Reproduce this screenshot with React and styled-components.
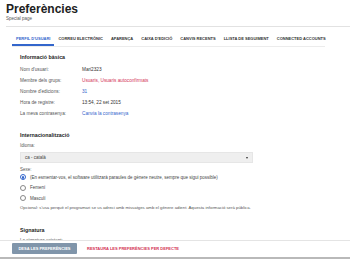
import React from "react";
import styled, { createGlobalStyle } from "styled-components";

const Global = createGlobalStyle`
  html, body { margin: 0; padding: 0; background: #fff; }
  body { font-family: "Liberation Sans", Arial, sans-serif; color: #222; }
  * { box-sizing: border-box; }
`;

const Page = styled.div`
  width: 350px;
  min-height: 259px;
  padding-top: 2px;
`;

const Header = styled.header`
  margin-left: 6px;
  border-bottom: 1px solid #e2e2e2;
  padding-bottom: 4px;
`;

const Title = styled.h1`
  margin: 0;
  font-size: 12px;
  line-height: 14px;
  font-weight: 700;
  color: #202122;
`;

const Subtitle = styled.div`
  font-size: 4.5px;
  line-height: 6px;
  color: #555;
`;

const TabBar = styled.nav`
  display: flex;
  margin-left: 12px;
  width: 313px;
  border-bottom: 1px solid #ececec;
`;

const Tab = styled.div`
  padding: 9px 4px 3px;
  font-size: 4px;
  line-height: 5px;
  font-weight: 700;
  white-space: nowrap;
  text-transform: uppercase;
  color: ${(p) => (p.$active ? "#3366cc" : "#333")};
  border-bottom: 2px solid ${(p) => (p.$active ? "#3366cc" : "transparent")};
`;

const Content = styled.main`
  padding-left: 20px;
`;

const SectionTitle = styled.h2`
  margin: ${(p) => p.$top}px 0 0;
  font-size: 5.3px;
  line-height: 8px;
  font-weight: 700;
  color: #222;
`;

const Rows = styled.div`
  margin-top: 3px;
`;

const Row = styled.div`
  display: grid;
  grid-template-columns: 62px 1fr;
  height: 11px;
  align-items: center;
  font-size: 4.7px;
`;

const Label = styled.span`
  color: #555;
`;

const Value = styled.span`
  color: ${(p) => (p.$tone === "red" ? "#d33355" : p.$tone === "blue" ? "#3366cc" : "#333")};
`;

const FieldLabel = styled.div`
  margin-top: ${(p) => p.$top}px;
  font-size: 4.5px;
  line-height: ${(p) => p.$lh || 6}px;
  color: #555;
`;

const Select = styled.div`
  margin-top: 3px;
  width: 233px;
  height: 11px;
  background: #efefef;
  border: 1px solid #e6e6e6;
  display: flex;
  align-items: center;
  justify-content: space-between;
  padding: 0 4px 0 4px;
  font-size: 4.5px;
  color: #444;
`;

const Caret = styled.span`
  width: 0;
  height: 0;
  border-left: 1.5px solid transparent;
  border-right: 1.5px solid transparent;
  border-top: 2px solid #333;
`;

const RadioRow = styled.div`
  display: flex;
  align-items: center;
  height: 10.5px;
  font-size: 4.5px;
  color: #444;
  gap: 4px;
`;

const Radio = styled.span`
  width: 6px;
  height: 6px;
  border-radius: 50%;
  border: ${(p) => (p.$on ? "1px solid #3366cc" : "0.7px solid #888")};
  display: flex;
  align-items: center;
  justify-content: center;
  flex: none;
  &::after {
    content: "";
    width: 2.6px;
    height: 2.6px;
    border-radius: 50%;
    background: ${(p) => (p.$on ? "#3366cc" : "transparent")};
  }
`;

const Help = styled.div`
  margin-top: 1px;
  font-size: 4.3px;
  line-height: 6px;
  color: #555;
`;

const Footer = styled.footer`
  position: fixed;
  left: 0;
  right: 0;
  bottom: 0;
  background: #fff;
  border-top: 1px solid #e4e4e4;
  border-bottom: 2px solid #b9b9b9;
  padding: 2px 12px 3px;
  display: flex;
  align-items: center;
  gap: 10px;
`;

const Button = styled.button`
  height: 11px;
  border: none;
  border-radius: 1px;
  padding: 0;
  font-family: inherit;
  font-size: 4px;
  font-weight: 700;
  white-space: nowrap;
  text-transform: uppercase;
  background: ${(p) => (p.$primary ? "#8095aa" : "transparent")};
  color: ${(p) => (p.$primary ? "#fff" : "#d33355")};
  width: ${(p) => (p.$primary ? "65px" : "auto")};
`;

const tabs = [
  "Perfil d'usuari",
  "Correu electrònic",
  "Aparença",
  "Caixa d'edició",
  "Canvis recents",
  "Llista de seguiment",
  "Connected accounts",
];

export default function App() {
  return (
    <Page>
      <Global />
      <Header>
        <Title>Preferències</Title>
        <Subtitle>Special page</Subtitle>
      </Header>
      <TabBar>
        {tabs.map((t, i) => (
          <Tab key={t} $active={i === 0}>
            {t}
          </Tab>
        ))}
      </TabBar>
      <Content>
        <SectionTitle $top={6}>Informació bàsica</SectionTitle>
        <Rows>
          <Row>
            <Label>Nom d'usuari:</Label>
            <Value>Mari2323</Value>
          </Row>
          <Row>
            <Label>Membre dels grups:</Label>
            <Value $tone="red">Usuaris, Usuaris autoconfirmats</Value>
          </Row>
          <Row>
            <Label>Nombre d'edicions:</Label>
            <Value $tone="blue">31</Value>
          </Row>
          <Row>
            <Label>Hora de registre:</Label>
            <Value>13:54, 22 set 2015</Value>
          </Row>
          <Row>
            <Label>La meva contrasenya:</Label>
            <Value $tone="blue">Canvia la contrasenya</Value>
          </Row>
        </Rows>
        <SectionTitle $top={12}>Internacionalització</SectionTitle>
        <FieldLabel $top={4}>Idioma:</FieldLabel>
        <Select>
          <span>ca - català</span>
          <Caret />
        </Select>
        <FieldLabel $top={4} $lh={5}>Sexe:</FieldLabel>
        <RadioRow>
          <Radio $on />
          <span>
            (En esmentar-vos, el software utilitzarà paraules de gènere neutre, sempre que sigui possible)
          </span>
        </RadioRow>
        <RadioRow>
          <Radio />
          <span>Femení</span>
        </RadioRow>
        <RadioRow>
          <Radio />
          <span>Masculí</span>
        </RadioRow>
        <Help>
          Opcional: s'usa perquè el programari se us adreci amb missatges amb el gènere adient. Aquesta informació serà pública.
        </Help>
        <SectionTitle $top={15}>Signatura</SectionTitle>
        <FieldLabel $top={4}>La signatura existent:</FieldLabel>
      </Content>
      <Footer>
        <Button $primary>Desa les preferències</Button>
        <Button>Restaura les preferències per defecte</Button>
      </Footer>
    </Page>
  );
}
